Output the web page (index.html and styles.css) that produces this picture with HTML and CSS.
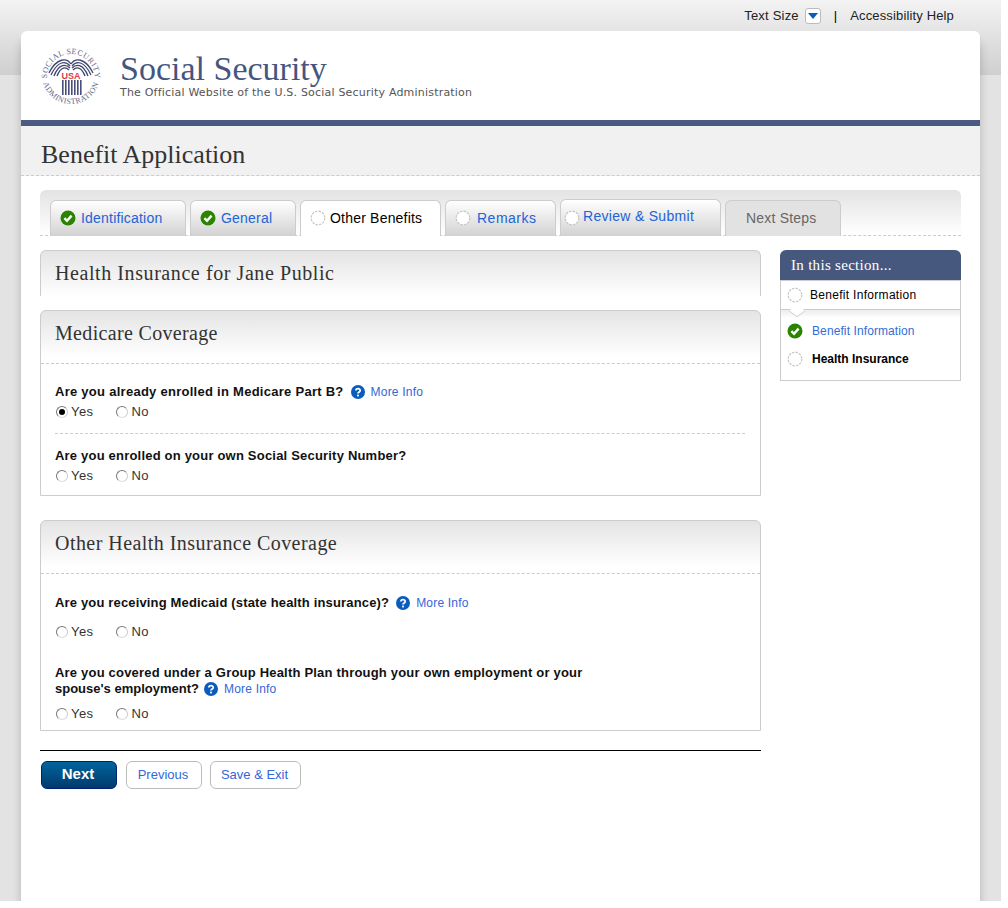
FILE: index.html
```html
<!DOCTYPE html>
<html lang="en">
<head>
  <meta charset="UTF-8" />
  <meta name="viewport" content="width=device-width, initial-scale=1.0"/>
  <title>Benefit Application</title>
  <link rel="stylesheet" href="styles.css">
</head>
<body>
  <!-- shared status icons -->
  <svg class="defs" width="0" height="0">
    <symbol id="icon-done" viewBox="0 0 16 16">
      <circle cx="8" cy="8" r="7.5" fill="#2b8400"/>
      <path d="M4.4 8.2 L7 10.8 L11.6 5.6" fill="none" stroke="#fff" stroke-width="2.4"/>
    </symbol>
    <symbol id="icon-todo" viewBox="0 0 16 16">
      <circle cx="8" cy="8" r="6.8" fill="#fff" stroke="#c4c4c4" stroke-width="1.2" stroke-dasharray="2.4 1.2"/>
    </symbol>
    <symbol id="icon-help" viewBox="0 0 14 14">
      <circle cx="7" cy="7" r="7" fill="#0a5cbd"/>
      <path d="M4.9 5.4 C4.9 3.1 9.2 3.1 9.2 5.4 C9.2 7 7 6.9 7 8.6" fill="none" stroke="#fff" stroke-width="1.7"/>
      <rect x="6.1" y="9.6" width="1.8" height="1.8" fill="#fff"/>
    </symbol>
  </svg>

  <div class="page">
    <div class="utility">
      <span class="util-text">Text Size</span>
      <span class="size-btn"><span class="size-arrow"></span></span>
      <span class="sep">|</span>
      <span class="util-text util-help">Accessibility Help</span>
    </div>

    <div class="card">
      <header class="masthead">
        <svg class="seal" width="70" height="70" viewBox="-4 -4 70 70">
          <defs>
            <path id="arc-top" d="M7 33 A24 24 0 0 1 55 33"/>
            <path id="arc-bottom" d="M2 30 A29 29 0 0 0 60 30"/>
          </defs>
          <text class="seal-text"><textPath href="#arc-top" startOffset="50%" text-anchor="middle">SOCIAL SECURITY</textPath></text>
          <text class="seal-text"><textPath href="#arc-bottom" startOffset="50%" text-anchor="middle">ADMINISTRATION</textPath></text>
          <g fill="none" stroke="#3f4470" stroke-width="1.3">
            <path d="M31 19 C27 13 17 12 9 28"/>
            <path d="M30 21 C26 16 18 15 11 30"/>
            <path d="M30 23 C26 19 19 18 14 31"/>
            <path d="M29 25 C26 22 21 21 17 31"/>
            <path d="M31 19 C35 13 45 12 53 28"/>
            <path d="M32 21 C36 16 44 15 51 30"/>
            <path d="M32 23 C36 19 43 18 48 31"/>
            <path d="M33 25 C36 22 41 21 45 31"/>
          </g>
          <text class="seal-usa" x="31" y="34" text-anchor="middle">USA</text>
          <g fill="#4a4f7c">
            <rect x="22" y="35" width="1.6" height="15"/>
            <rect x="25" y="35" width="1.6" height="15"/>
            <rect x="28" y="35" width="1.6" height="15"/>
            <rect x="31" y="35" width="1.6" height="15"/>
            <rect x="34" y="35" width="1.6" height="15"/>
            <rect x="37" y="35" width="1.6" height="15"/>
            <rect x="40" y="35" width="1.6" height="15"/>
          </g>
        </svg>
        <div class="brand">
          <div class="brand-name">Social Security</div>
          <div class="brand-sub">The Official Website of the U.S. Social Security Administration</div>
        </div>
      </header>

      <div class="title-band">
        <h1>Benefit Application</h1>
      </div>

      <div class="content">
        <nav class="tabs">
          <a class="tab tab-id link"><svg class="status"><use href="#icon-done"/></svg>Identification</a>
          <a class="tab tab-general link"><svg class="status"><use href="#icon-done"/></svg>General</a>
          <a class="tab tab-other active"><svg class="status"><use href="#icon-todo"/></svg>Other Benefits</a>
          <a class="tab tab-remarks link"><svg class="status"><use href="#icon-todo"/></svg>Remarks</a>
          <a class="tab tab-review link"><svg class="status"><use href="#icon-todo"/></svg>Review &amp; Submit</a>
          <a class="tab tab-next disabled">Next Steps</a>
        </nav>

        <div class="columns">
          <main class="main">
            <section class="panel panel-title">
              <h2>Health Insurance for Jane Public</h2>
            </section>

            <section class="panel panel-medicare">
              <h2 class="panel-head">Medicare Coverage</h2>
              <div class="question q-first">
                <div class="q-line"><span class="q-text q-wide">Are you already enrolled in Medicare Part B?</span><svg class="help"><use href="#icon-help"/></svg><a class="more">More Info</a></div>
                <div class="radios">
                  <label><span class="radio checked"></span>Yes</label>
                  <label><span class="radio"></span>No</label>
                </div>
              </div>
              <div class="question q-ruled">
                <div class="q-line"><span class="q-text">Are you enrolled on your own Social Security Number?</span></div>
                <div class="radios">
                  <label><span class="radio"></span>Yes</label>
                  <label><span class="radio"></span>No</label>
                </div>
              </div>
            </section>

            <section class="panel panel-other">
              <h2 class="panel-head">Other Health Insurance Coverage</h2>
              <div class="question q-medicaid">
                <div class="q-line"><span class="q-text q-narrow">Are you receiving Medicaid (state health insurance)?</span><svg class="help"><use href="#icon-help"/></svg><a class="more">More Info</a></div>
                <div class="radios radios-far">
                  <label><span class="radio"></span>Yes</label>
                  <label><span class="radio"></span>No</label>
                </div>
              </div>
              <div class="question q-group">
                <div class="q-line"><span class="q-text">Are you covered under a Group Health Plan through your own employment or your</span></div>
                <div class="q-line"><span class="q-text q-tight">spouse's employment?</span><svg class="help help-near"><use href="#icon-help"/></svg><a class="more">More Info</a></div>
                <div class="radios radios-group">
                  <label><span class="radio"></span>Yes</label>
                  <label><span class="radio"></span>No</label>
                </div>
              </div>
            </section>

            <div class="actions">
              <a class="btn btn-primary">Next</a>
              <a class="btn btn-prev">Previous</a>
              <a class="btn btn-save">Save &amp; Exit</a>
            </div>
          </main>

          <aside class="side">
            <div class="side-head">In this section...</div>
            <div class="side-box">
              <div class="side-current"><svg class="status"><use href="#icon-todo"/></svg>Benefit Information</div>
              <ul class="side-list">
                <li class="side-link"><svg class="status"><use href="#icon-done"/></svg>Benefit Information</li>
                <li class="side-here"><svg class="status"><use href="#icon-todo"/></svg>Health Insurance</li>
              </ul>
            </div>
          </aside>
        </div>
      </div>
    </div>
  </div>
</body>
</html>
```

FILE: styles.css
```css
/* 1. GLOBAL */
* {
  box-sizing: border-box;
  margin: 0;
  padding: 0;
}
body {
  background-color: #fff;
  font-family: "Liberation Sans", Arial, sans-serif;
  color: #000;
}
.defs {
  position: absolute;
}
.page {
  width: 1001px;
  height: 901px;
  overflow: hidden;
  background: linear-gradient(#f3f3f3, #cfcfcf) top / 100% 75px no-repeat, #e3e3e3;
}

/* 2. TOP UTILITY LINKS */
.utility {
  height: 31px;
  padding-right: 47px;
  display: flex;
  align-items: center;
  justify-content: flex-end;
  font-size: 13px;
  color: #222;
}
.util-text {
  letter-spacing: 0.2px;
}
.util-help {
  letter-spacing: 0.15px;
}
.size-btn {
  width: 16px;
  height: 16px;
  margin-left: 6px;
  background: #fff;
  border: 1px solid #bbb;
  border-radius: 3px;
  display: flex;
  align-items: center;
  justify-content: center;
}
.size-arrow {
  border-left: 5px solid transparent;
  border-right: 5px solid transparent;
  border-top: 6px solid #0a5cbd;
}
.sep {
  margin: 0 13px;
  color: #000;
}

/* 3. CARD + HEADER */
.card {
  width: 959px;
  height: 870px;
  margin-left: 21px;
  background-color: #fff;
  border-radius: 6px 6px 0 0;
  box-shadow: 0 10px 10px rgba(0, 0, 0, 0.2);
}
.masthead {
  height: 89px;
  padding: 10px 0 0 15px;
  display: flex;
  align-items: flex-start;
}
.seal {
  flex: none;
}
.seal-text {
  font-family: "Liberation Serif", serif;
  font-size: 8px;
  letter-spacing: 0.4px;
  fill: #66668a;
}
.seal-usa {
  font-family: "Liberation Sans", sans-serif;
  font-size: 9px;
  font-weight: bold;
  fill: #d8404c;
}
.brand {
  margin-left: 14px;
  padding-top: 9px;
}
.brand-name {
  font-family: "Liberation Serif", serif;
  font-size: 34px;
  line-height: 37px;
  color: #44567f;
}
.brand-sub {
  font-family: "DejaVu Sans", sans-serif;
  font-size: 11px;
  line-height: 12px;
  letter-spacing: 0.2px;
  color: #555;
}
.title-band {
  height: 56px;
  padding: 13px 0 0 20px;
  background-color: #f1f1f1;
  border-top: 6px solid #4a5a80;
  border-bottom: 1px dashed #ccc;
}
h1 {
  font-family: "Liberation Serif", serif;
  font-weight: normal;
  font-size: 26px;
  line-height: 32px;
  color: #333;
}

/* 4. TABS */
.content {
  padding: 14px 19px 0;
}
.tabs {
  height: 46px;
  padding: 10px 0 0 10px;
  display: flex;
  align-items: flex-end;
  gap: 4px;
  background: linear-gradient(#e3e3e3, #fff) no-repeat;
  border-radius: 6px 6px 0 0;
  border-bottom: 1px dashed #ccc;
}
.tab {
  height: 36px;
  margin-bottom: -1px;
  padding: 0 0 2px 9px;
  display: flex;
  align-items: center;
  gap: 5px;
  font-size: 14px;
  letter-spacing: 0.2px;
  background: linear-gradient(#fff, #d2d2d2);
  border: 1px solid #ccc;
  border-bottom: none;
  border-radius: 6px 6px 0 0;
}
.link {
  color: #2363d6;
}
.tab-id { width: 136px; }
.tab-general { width: 106px; }
.tab-other {
  width: 141px;
  gap: 4px;
}
.tab-remarks {
  width: 111px;
  gap: 6px;
  letter-spacing: 0.5px;
}
.tab-review {
  width: 161px;
  height: 37px;
  padding: 0 0 5px 3px;
  gap: 3px;
  letter-spacing: 0.3px;
}
.tab-review .status {
  margin-top: 5px;
}
.tab-next {
  width: 116px;
  padding-left: 20px;
}
.active {
  background: #fff;
  color: #000;
}
.disabled {
  background: #e2e2e2;
  color: #666;
}
.status {
  width: 16px;
  height: 16px;
  flex: none;
}

/* 5. COLUMNS + PANELS */
.columns {
  margin-top: 14px;
  display: grid;
  grid-template-columns: 721px 181px;
  justify-content: space-between;
}
.panel {
  border: 1px solid #ccc;
  border-radius: 6px 6px 0 0;
  background: linear-gradient(#e4e4e4, #fff 46px) no-repeat;
}
.panel h2 {
  font-family: "Liberation Serif", serif;
  font-weight: normal;
  font-size: 20px;
  letter-spacing: 0.45px;
  color: #333;
  padding-left: 14px;
}
.panel-title {
  height: 46px;
  border-bottom: none;
  padding-top: 11px;
  line-height: 22px;
}
.panel-title h2 {
  letter-spacing: 0.58px;
}
.panel-medicare {
  height: 186px;
  margin-top: 14px;
}
.panel-medicare h2 {
  letter-spacing: 0.33px;
}
.panel-other {
  height: 211px;
  margin-top: 24px;
}
.panel-head {
  height: 53px;
  line-height: 44px;
  border-bottom: 1px dashed #ccc;
}
.question {
  margin: 0 15px 0 14px;
}
.q-line {
  height: 16px;
  display: flex;
  align-items: center;
}
.q-text {
  font-size: 13px;
  line-height: 16px;
  font-weight: bold;
  letter-spacing: 0.2px;
  color: #111;
}
.q-wide { letter-spacing: 0.27px; }
.q-narrow { letter-spacing: 0.16px; }
.q-tight { letter-spacing: 0; }
.q-first {
  padding: 20px 0 13px;
  border-bottom: 1px dashed #ccc;
}
.q-ruled {
  padding-top: 14px;
}
.q-medicaid {
  padding-top: 21px;
}
.q-group {
  padding-top: 25px;
}
.help {
  width: 14px;
  height: 14px;
  flex: none;
  margin: 0 6px 0 7px;
}
.help-near {
  margin-left: 5px;
}
.more {
  font-size: 12px;
  font-weight: normal;
  letter-spacing: 0.2px;
  color: #3466d8;
}
.radios {
  margin-top: 4px;
  height: 16px;
  display: flex;
  gap: 22px;
  font-size: 13px;
  line-height: 16px;
  letter-spacing: 0.4px;
  color: #333;
}
.radios-far {
  margin-top: 13px;
}
.radios-group {
  margin-top: 9px;
}
.radios label {
  display: flex;
  align-items: center;
  gap: 3px;
}
.radio {
  width: 12px;
  height: 12px;
  margin-left: 1px;
  border-radius: 50%;
  background: #fff;
  border: 1px solid;
  border-color: #777 #ccc #ddd #777;
  display: flex;
  align-items: center;
  justify-content: center;
}
.checked::after {
  content: "";
  width: 6px;
  height: 6px;
  border-radius: 50%;
  background: #000;
}

/* 6. BUTTONS */
.actions {
  margin-top: 19px;
  padding: 10px 0 0 1px;
  border-top: 1px solid #000;
  display: flex;
  gap: 8px;
}
.btn {
  width: 76px;
  height: 28px;
  padding: 0 2px 1px 0;
  display: flex;
  align-items: center;
  justify-content: center;
  font-size: 13px;
  color: #3466d8;
  background: #fff;
  border: 1px solid #bbb;
  border-radius: 6px;
}
.btn-primary {
  margin-right: 1px;
  padding-bottom: 3px;
  font-size: 15px;
  font-weight: bold;
  color: #fff;
  background: linear-gradient(#00659b, #003a6e);
  border-color: #001f70;
}
.btn-save {
  width: 91px;
}

/* 7. SIDEBAR */
.side-head {
  height: 30px;
  padding-left: 11px;
  font-family: "Liberation Serif", serif;
  font-size: 15px;
  line-height: 30px;
  letter-spacing: 0.3px;
  color: #fff;
  background-color: #47587f;
  border-radius: 6px 6px 0 0;
}
.side-box {
  height: 101px;
  border: 1px solid #ccc;
  border-top: none;
}
.side-current {
  position: relative;
  height: 30px;
  padding-left: 6px;
  display: flex;
  align-items: center;
  gap: 7px;
  font-size: 12px;
  letter-spacing: 0.3px;
  border-top: 1px solid #ccc;
  border-bottom: 1px solid #ccc;
}
/* little pointer under the current page */
.side-current::after {
  content: "";
  position: absolute;
  left: 10px;
  bottom: -8px;
  width: 11px;
  height: 11px;
  background: #fff;
  border-right: 1px solid #ccc;
  border-bottom: 1px solid #ccc;
  transform: scale(1, 0.75) rotate(45deg);
}
.side-list {
  list-style: none;
  padding-top: 7px;
  background: linear-gradient(#ececec, #fff 8px) no-repeat;
}
.side-list li {
  height: 28px;
  padding-left: 6px;
  display: flex;
  align-items: center;
  gap: 9px;
  font-size: 12px;
}
.side-link {
  color: #2f6ed8;
  letter-spacing: 0.1px;
}
.side-here {
  font-weight: bold;
}
```
